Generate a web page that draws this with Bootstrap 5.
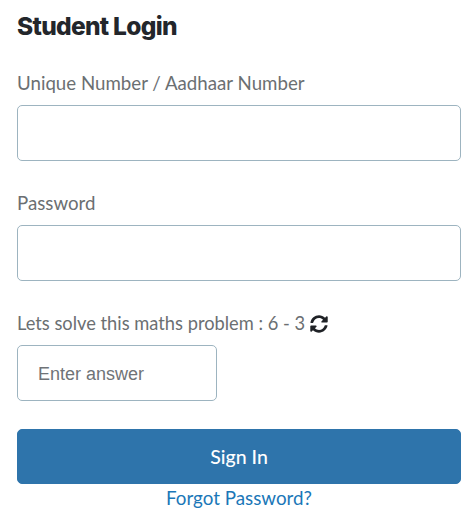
<!DOCTYPE html>
<html lang="en">
<head>
<meta charset="utf-8">
<title>Student Login</title>
<link href="https://cdn.jsdelivr.net/npm/bootstrap@5.3.0/dist/css/bootstrap.min.css" rel="stylesheet">
<style>
body { font-family: "Lato", "Liberation Sans", sans-serif; background: #fff; color: #6b6f72; }
.login-wrap { padding: 10px 8px 0 17px; }
.login-title { font-family: "Inter", "Liberation Sans", sans-serif; font-weight: 800; font-size: 24.5px; line-height: 32px; letter-spacing: -0.7px; color: #23262b; margin: 0 0 28px; }
.login-label { font-size: 18.7px; line-height: 26px; color: #6b6f72; margin-bottom: 9px; display: block; }
.captcha-label { font-size: 18.3px; }
.login-input { height: 56px; border: 1px solid #9db4c0; border-radius: 5px; font-size: 18px; padding: 6px 20px; }
.login-input::placeholder { color: #6f7377; opacity: 1; font-family: "Liberation Sans", sans-serif; }
.login-field { margin-bottom: 29px; }
.answer-input { width: 200px; }
.login-field-captcha { margin-bottom: 28px; }
.sync-icon { width: 18px; height: 18px; fill: #1f2226; vertical-align: -3px; }
.signin-btn { height: 55px; font-size: 19.5px; font-weight: 500; background: #2e74ab; border: 1px solid #2e74ab; border-radius: 5px; color: #fff; padding-top: 7px; }
.signin-btn:hover { background: #2e74ab; color: #fff; }
.forgot-link { font-size: 18.8px; line-height: 28px; color: #1b77b8; text-decoration: none; }
</style>
</head>
<body>
<main class="login-wrap">
  <h1 class="login-title">Student Login</h1>
  <form>
    <div class="login-field">
      <label class="login-label" for="uid">Unique Number / Aadhaar Number</label>
      <input class="form-control login-input" id="uid" type="text">
    </div>
    <div class="login-field">
      <label class="login-label" for="pwd">Password</label>
      <input class="form-control login-input" id="pwd" type="password">
    </div>
    <div class="login-field-captcha">
      <label class="login-label captcha-label" for="ans">Lets solve this maths problem : 6 - 3
        <svg class="sync-icon" viewBox="0 0 512 512" aria-hidden="true"><path d="M370.72 133.28C339.458 104.008 298.888 87.962 255.848 88c-77.458.068-144.328 53.178-162.791 126.85-1.344 5.363-6.122 9.15-11.651 9.15H24.103c-7.498 0-13.194-6.807-11.807-14.176C33.933 94.924 134.813 8 256 8c66.448 0 126.791 26.136 171.315 68.685L463.03 40.97C478.149 25.851 504 36.559 504 57.941V192c0 13.255-10.745 24-24 24H345.941c-21.382 0-32.09-25.851-16.971-40.971l41.75-41.749zM32 296h134.059c21.382 0 32.09 25.851 16.971 40.971l-41.75 41.75c31.262 29.273 71.835 45.319 114.876 45.28 77.418-.07 144.315-53.144 162.787-126.849 1.344-5.363 6.122-9.15 11.651-9.15h57.304c7.498 0 13.194 6.807 11.807 14.176C478.067 417.076 377.187 504 256 504c-66.448 0-126.791-26.136-171.315-68.685L48.97 471.03C33.851 486.149 8 475.441 8 454.059V320c0-13.255 10.745-24 24-24z"/></svg>
      </label>
      <input class="form-control login-input answer-input" id="ans" type="text" placeholder="Enter answer">
    </div>
    <button class="btn w-100 signin-btn d-block" type="button">Sign In</button>
    <div class="text-center"><a class="forgot-link" href="#">Forgot Password?</a></div>
  </form>
</main>
</body>
</html>
